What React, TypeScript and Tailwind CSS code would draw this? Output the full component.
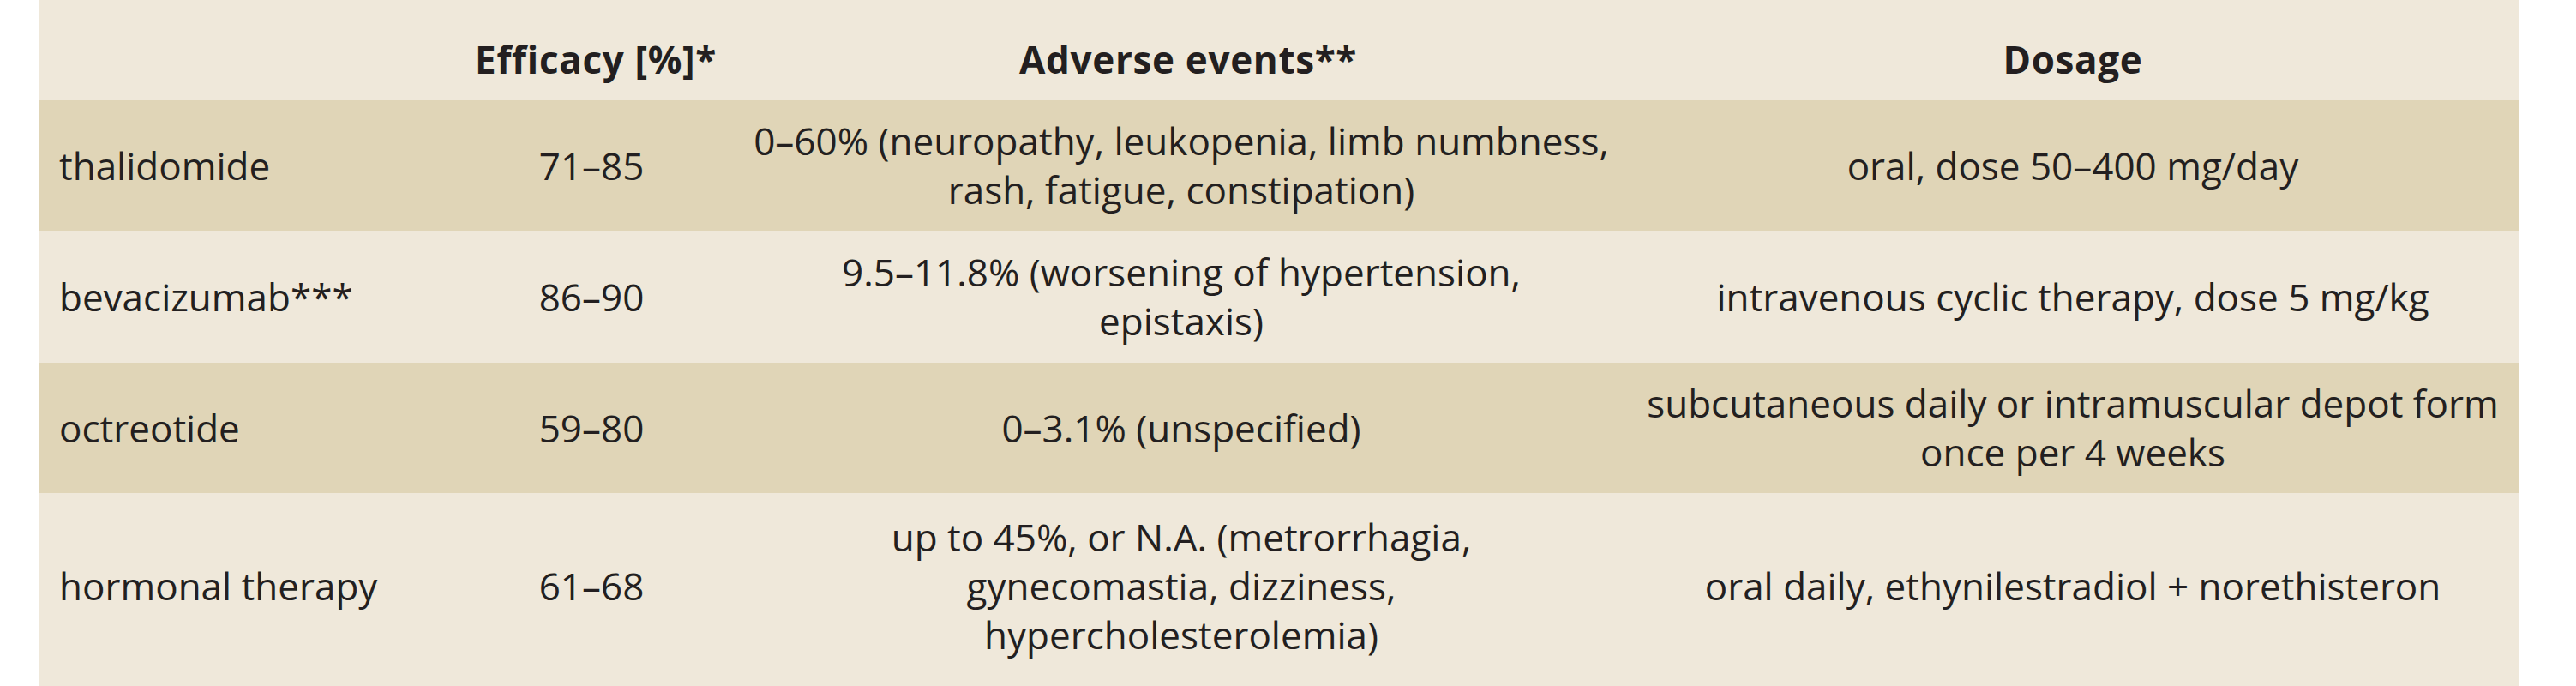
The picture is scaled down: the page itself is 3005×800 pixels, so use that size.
import React from "react";

type Row = { name: string; eff: string; ae: React.ReactNode; dose: React.ReactNode; dark: boolean; pad: string };

const rows: Row[] = [
  {
    name: "thalidomide",
    eff: "71–85",
    ae: (<>0–60% (neuropathy, leukopenia, limb numbness,<br />rash, fatigue, constipation)</>),
    dose: "oral, dose 50–400 mg/day",
    dark: true,
    pad: "py-[19px]",
  },
  {
    name: "bevacizumab***",
    eff: "86–90",
    ae: (<>9.5–11.8% (worsening of hypertension,<br />epistaxis)</>),
    dose: "intravenous cyclic therapy, dose 5 mg/kg",
    dark: false,
    pad: "py-[20px]",
  },
  {
    name: "octreotide",
    eff: "59–80",
    ae: "0–3.1% (unspecified)",
    dose: (<>subcutaneous daily or intramuscular depot form<br />once per 4 weeks</>),
    dark: true,
    pad: "py-[19px]",
  },
  {
    name: "hormonal therapy",
    eff: "61–68",
    ae: (<>up to 45%, or N.A. (metrorrhagia,<br />gynecomastia, dizziness,<br />hypercholesterolemia)</>),
    dose: "oral daily, ethynilestradiol + norethisteron",
    dark: false,
    pad: "pt-[23px] pb-[31px]",
  },
];

export default function App() {
  return (
    <div
      className="w-[3005px] h-[800px] bg-white flex pl-[46px] overflow-hidden text-[#231f20] text-[44px] leading-[57px] tracking-[0em]"
      style={{ fontFamily: '"Open Sans", "Noto Sans", sans-serif' }}
    >
      <div className="w-[2892px] h-full bg-[#efe8da] flex flex-col">
        <div className="grid grid-cols-[476px_336px_1040px_1040px] pt-[41px] pb-[19px] font-bold tracking-[0.015em]">
          <div className="px-[23px]"></div>
          <div className="text-center pl-[10px]">Efficacy [%]*</div>
          <div className="text-center pl-[16px]">Adverse events**</div>
          <div className="text-center">Dosage</div>
        </div>
        {rows.map((r) => (
          <div
            key={r.name}
            className={`grid grid-cols-[476px_336px_1040px_1040px] items-center ${r.pad} ${r.dark ? "bg-[#e0d5b7]" : "bg-[#efe8da]"}`}
          >
            <div className="px-[23px]">{r.name}</div>
            <div className="text-center">{r.eff}</div>
            <div className="text-center">{r.ae}</div>
            <div className="text-center">{r.dose}</div>
          </div>
        ))}
      </div>
    </div>
  );
}
